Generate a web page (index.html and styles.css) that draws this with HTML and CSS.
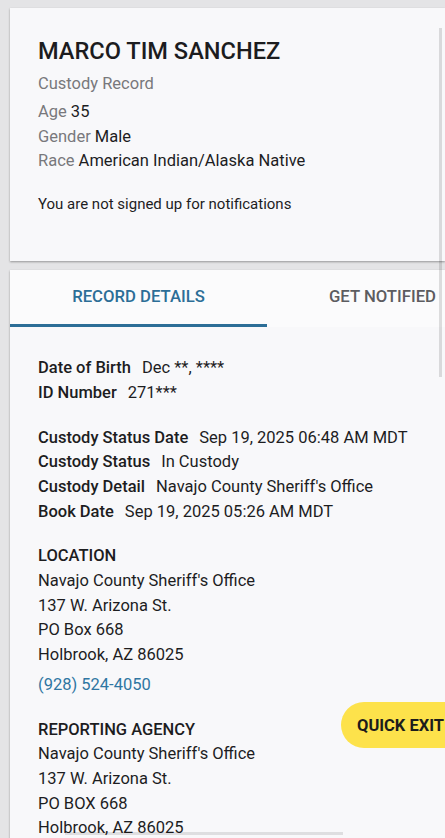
FILE: index.html
```html
<!DOCTYPE html>
<html lang="en">
<head>
	<meta charset="UTF-8">
	<title>Custody Record</title>
	<link rel="stylesheet" href="styles.css">
</head>
<body>
	<div class="page">
		<!-- summary card -->
		<div class="card summary">
			<h1 class="name">MARCO TIM SANCHEZ</h1>
			<p class="kind">Custody Record</p>
			<p class="row"><span class="muted">Age</span> 35</p>
			<p class="row"><span class="muted">Gender</span> Male</p>
			<p class="row"><span class="muted">Race</span> American Indian/Alaska Native</p>
			<p class="notice">You are not signed up for notifications</p>
		</div>

		<!-- details card -->
		<div class="card details">
			<div class="tabs">
				<div class="tab active">RECORD DETAILS</div>
				<div class="tab">GET NOTIFIED</div>
			</div>
			<div class="body">
				<div class="group">
					<p class="row"><span class="label">Date of Birth</span>Dec **, ****</p>
					<p class="row"><span class="label">ID Number</span>271***</p>
				</div>
				<div class="group">
					<p class="row"><span class="label">Custody Status Date</span>Sep 19, 2025 06:48 AM MDT</p>
					<p class="row"><span class="label">Custody Status</span>In Custody</p>
					<p class="row"><span class="label">Custody Detail</span>Navajo County Sheriff's Office</p>
					<p class="row"><span class="label">Book Date</span>Sep 19, 2025 05:26 AM MDT</p>
				</div>
				<div class="group">
					<p class="row label">LOCATION</p>
					<p class="row">Navajo County Sheriff's Office</p>
					<p class="row">137 W. Arizona St.</p>
					<p class="row">PO Box 668</p>
					<p class="row">Holbrook, AZ 86025</p>
					<a class="phone" href="#">(928) 524-4050</a>
				</div>
				<div class="group">
					<p class="row label">REPORTING AGENCY</p>
					<p class="row">Navajo County Sheriff's Office</p>
					<p class="row">137 W. Arizona St.</p>
					<p class="row">PO BOX 668</p>
					<p class="row">Holbrook, AZ 86025</p>
				</div>
			</div>
		</div>
	</div>

	<button class="quick-exit">QUICK EXIT</button>
	<!-- scroll indicators -->
	<div class="scroll-v"></div>
	<div class="scroll-h"></div>
</body>
</html>
```

FILE: styles.css
```css
*{margin:0;padding:0;box-sizing:border-box;}
html,body {
	height: 100%;
	overflow: hidden;
}
body {
	background: #e4e4e6;
	font-family: Roboto, "Noto Sans", "Liberation Sans", sans-serif;
	color: #1d1d1f;
	font-size: 16.5px;
}
.page {
	padding: 8px 0 0 10px;
}
.card {
	background: #f8f8fa;
	box-shadow: 0 1px 2px rgba(0,0,0,.35);
}
.summary {
	padding: 29px 28px 47px;
}
.name {
	font-size: 23.6px;
	line-height: 28px;
	font-weight: 500;
	color: #1c1c1e;
}
.kind {
	margin-top: 7px;
	margin-bottom: 4px;
	line-height: 24px;
	color: #78787c;
}
.row {
	line-height: 24.7px;
}
.muted {
	color: #78787c;
}
.notice {
	margin-top: 20px;
	font-size: 15px;
	line-height: 20px;
}
.details {
	margin-top: 9px;
}
.tabs {
	display: flex;
	background: #fbfbfc;
}
.tab {
	flex: none;
	width: 257px;
	height: 57px;
	padding-bottom: 2px;
	display: flex;
	align-items: center;
	justify-content: center;
	font-size: 16.7px;
	font-weight: 500;
	color: #5c5c60;
	border-bottom: 3px solid transparent;
	white-space: nowrap;
}
.tab.active {
	color: #2c6e97;
	border-bottom-color: #2c6e97;
}
.tab + .tab {
	justify-content: flex-start;
	padding-left: 62px;
}
.body {
	padding: 29px 28px 40px;
}
.group + .group {
	margin-top: 20px;
}
.label {
	font-weight: 500;
	margin-right: 11px;
}
.phone {
	display: block;
	margin-top: 5px;
	line-height: 24.7px;
	color: #2f76a2;
	text-decoration: none;
}
.quick-exit {
	position: fixed;
	left: 341px;
	top: 702px;
	width: 140px;
	height: 46px;
	border: none;
	border-radius: 23px;
	background: #fde24b;
	padding-left: 16px;
	text-align: left;
	font-family: Roboto, "Liberation Sans", sans-serif;
	font-size: 16.5px;
	font-weight: 700;
	color: #1c1c1c;
}
.scroll-v {
	position: fixed;
	left: 439px;
	top: 28px;
	width: 3px;
	height: 349px;
	background: rgba(0,0,0,.12);
}
.scroll-h {
	position: fixed;
	left: 65px;
	top: 832px;
	width: 278px;
	height: 3px;
	background: rgba(0,0,0,.1);
}
```
